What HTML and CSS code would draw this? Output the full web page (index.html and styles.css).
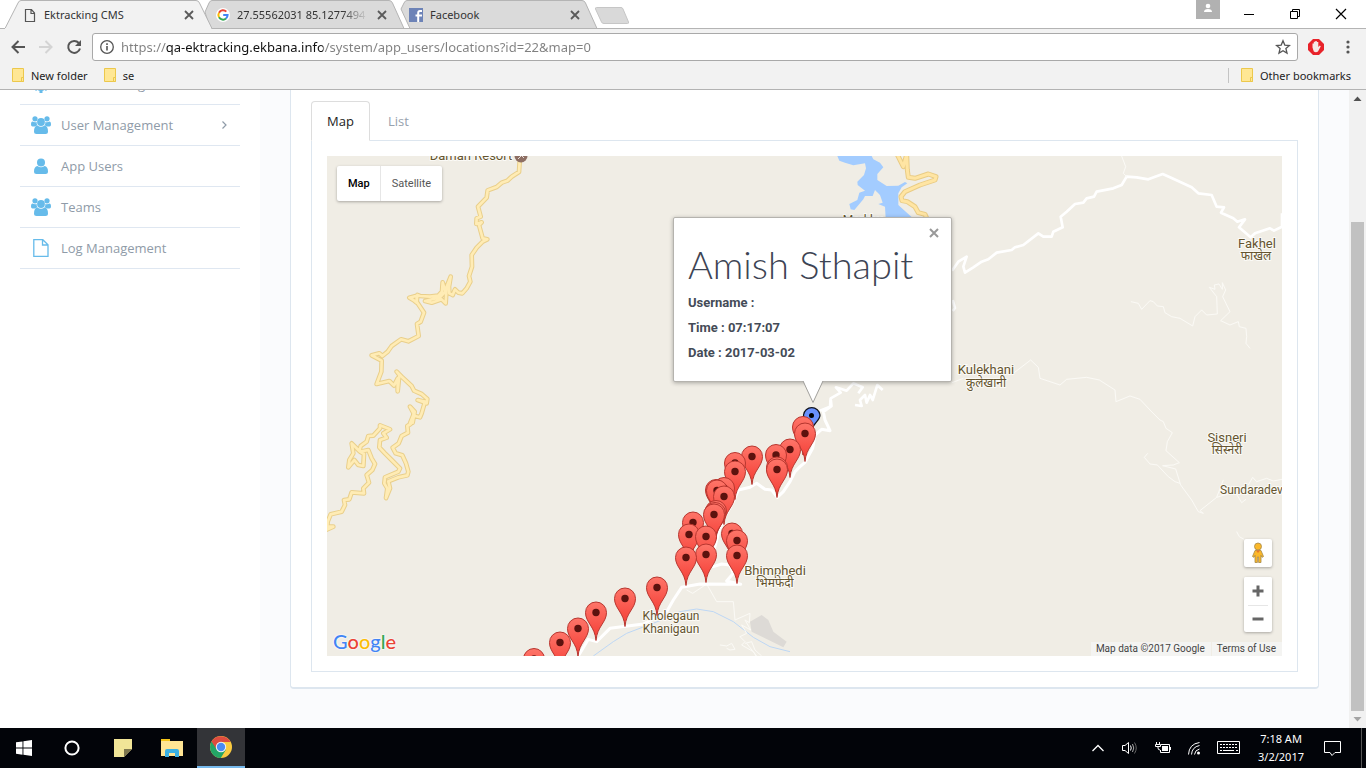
FILE: index.html
```html
<!DOCTYPE html>
<html lang="en">
<head>
<meta charset="utf-8">
<title>Ektracking CMS</title>
<link rel="stylesheet" href="styles.css">
</head>
<body>
<svg class="defs" width="0" height="0" aria-hidden="true">
  <defs>
    <linearGradient id="red" x1="0" y1="0" x2="0" y2="1"><stop offset="0" stop-color="#fe7569"/><stop offset="1" stop-color="#f43b33"/></linearGradient>
    <g id="pin"><path d="M0 28C-1 14-10.500 10-10.500 0A10.500 10.500 0 0 1 10.500 0C10.500 10 1 14 0 28Z" fill="url(#red)" stroke="#b8362f"/><circle r="3.700" fill="#5c120e"/></g>
    <symbol id="folder" viewBox="0 0 12 14"><path d="M.5.500h11v13H.5z" fill="#ffe794" stroke="#ecc84c"/><path d="M9.500 13.500v-4h2v4z" fill="#ffe794" stroke="#ecc84c"/></symbol>
    <symbol id="close" viewBox="0 0 14 14"><path d="M3 3l8 8M11 3l-8 8" stroke="#5a5a5a" stroke-width="1.800"/></symbol>
    <symbol id="users" viewBox="0 0 20 18"><g fill="#66bbea"><circle cx="4" cy="2.800" r="2.600"/><circle cx="16" cy="2.800" r="2.600"/><path d="M0 8.500Q0 5.500 1.600 5.500Q4 7 5.600 5.800Q5.400 8 6.600 9.500Q5 9.500 4.200 10.500H1.500Q0 10.500 0 8.500ZM20 8.500Q20 5.500 18.400 5.500Q16 7 14.400 5.800Q14.600 8 13.400 9.500Q15 9.500 15.800 10.500h2.700Q20 10.500 20 8.500Z"/><circle cx="10" cy="6" r="3.900"/><path d="M6.500 9.600Q10 12 13.500 9.600Q17 10 17 15.500Q17 18 14.500 18H5.500Q3 18 3 15.500Q3 10 6.500 9.600Z"/></g></symbol>
    <symbol id="user" viewBox="0 0 20 18"><g fill="#66bbea"><circle cx="10" cy="5.500" r="4"/><path d="M6.500 9Q10 11.500 13.500 9Q17 9.500 17 14.500Q17 17 14.500 17H5.500Q3 17 3 14.500Q3 9.500 6.500 9Z"/></g></symbol>
    <symbol id="file" viewBox="0 0 20 20"><path d="M2.800 1.700h9l5.200 5v11.600H2.800zM11.500 1.700V7H17" fill="none" stroke="#66bbea" stroke-width="1.300"/></symbol>
    <symbol id="gear" viewBox="0 0 20 20"><circle cx="10" cy="10" r="5" fill="none" stroke="#66bbea" stroke-width="4"/><path d="M10 1v4M10 15v4M1 10h4M15 10h4M4 4l2 2M14 14l2 2M4 16l2-2M14 6l2-2" stroke="#66bbea" stroke-width="3"/></symbol>
  </defs>
</svg>

<header class="browser">
  <div class="tabstrip">
    <svg class="tabshapes" width="640" height="29" viewBox="0 0 640 29" aria-hidden="true">
      <path d="M401 9L404 3Q405 .5 407 .5H582Q584.500 .5 585.500 3L597 28.500H410Z" fill="#dadada" stroke="#b4b4b4"/>
      <path d="M205 12L209 3Q210 .5 212 .5H389Q391.500 .5 392.500 3L404 28.500H210Z" fill="#dadada" stroke="#b4b4b4"/>
      <path d="M596.500 7.500H621Q622.500 7.500 623 9L628.500 22Q629 23.500 627.500 23.500H604Q602 23.500 601.500 22L595.500 9Q595 7.500 596.500 7.500Z" fill="#d9d9d9" stroke="#c6c6c6"/>
      <path d="M0 28.500H5L18 3Q19 .5 21 .5H196Q198.500 .5 199.500 3L212 28.500" fill="#f2f2f2" stroke="#b4b4b4"/>
      <path d="M5 28.500H211" stroke="#f2f2f2"/>
    </svg>
    <div class="tab">
      <svg width="14" height="14" viewBox="0 0 14 14"><path d="M2.500 1.500h6l3 3.500v8.500h-9zM8 1.500v4h3.500" fill="none" stroke="#555" stroke-width="1.200"/></svg>
      <span class="tab-title">Ektracking CMS</span>
      <button class="icon-btn" aria-label="Close tab"><svg width="14" height="14"><use href="#close"/></svg></button>
    </div>
    <div class="tab">
      <svg width="14" height="14" viewBox="0 0 14 14"><circle cx="7" cy="7" r="7" fill="#fff"/><g fill="none" stroke-width="2"><path d="M10.300 3.600A4.600 4.600 0 0 0 3 4.700" stroke="#ea4335"/><path d="M3 4.700A4.600 4.600 0 0 0 3 9.300" stroke="#fbbc05"/><path d="M3 9.300A4.600 4.600 0 0 0 10 10.500" stroke="#34a853"/><path d="M10 10.500Q11.600 9 11.600 7H7.200" stroke="#4285f4"/></g></svg>
      <span class="tab-title fade">27.55562031 85.1277494</span>
      <button class="icon-btn" aria-label="Close tab"><svg width="14" height="14"><use href="#close"/></svg></button>
    </div>
    <div class="tab">
      <svg width="14" height="14" viewBox="0 0 14 14"><path d="M0 0h14v14H0z" fill="#6d83b7"/><path d="M9.200 14V5Q9.200 3 11 3h2M6.500 7.500H13" fill="none" stroke="#fff" stroke-width="2"/></svg>
      <span class="tab-title">Facebook</span>
      <button class="icon-btn" aria-label="Close tab"><svg width="14" height="14"><use href="#close"/></svg></button>
    </div>
    <div class="window-controls">
      <button class="avatar" aria-label="Profile"><svg width="24" height="19" viewBox="0 0 24 19"><circle cx="12" cy="6" r="2.300" fill="#fff"/><path d="M8 12q0-3 4-3t4 3z" fill="#fff"/></svg></button>
      <button class="winbtn" aria-label="Minimize"><svg width="12" height="12"><path d="M1 6.500h10" stroke="#000"/></svg></button>
      <button class="winbtn" aria-label="Restore"><svg width="12" height="12"><path d="M1.500 3.500h7v7h-7zM3.500 3V1.500h7v7H9" fill="none" stroke="#000"/></svg></button>
      <button class="winbtn" aria-label="Close"><svg width="12" height="12"><path d="M1 1l10 10M11 1L1 11" stroke="#000" stroke-width="1.200"/></svg></button>
    </div>
  </div>
  <div class="toolbar">
    <button class="navbtn" aria-label="Back"><svg width="16" height="16" viewBox="0 0 16 16"><path d="M15 8H3M8.500 2L2.500 8l6 6" fill="none" stroke="#555" stroke-width="2"/></svg></button>
    <button class="navbtn" aria-label="Forward"><svg width="16" height="16" viewBox="0 0 16 16"><path d="M1 8h12M7.500 2l6 6-6 6" fill="none" stroke="#d4d4d4" stroke-width="2"/></svg></button>
    <button class="navbtn" aria-label="Reload"><svg width="16" height="16" viewBox="0 0 16 16"><path d="M12.800 4A6 6 0 1 0 14 9.500" fill="none" stroke="#555" stroke-width="2"/><path d="M15 1v6H9z" fill="#555"/></svg></button>
    <div class="omnibox">
      <svg width="16" height="16" viewBox="0 0 16 16"><circle cx="8" cy="8" r="6.300" fill="none" stroke="#555" stroke-width="1.300"/><path d="M8 7v4.500M8 4.300v1.700" stroke="#555" stroke-width="1.600"/></svg>
      <input class="url" type="text" aria-label="Address" value="https://qa-ektracking.ekbana.info/system/app_users/locations?id=22&amp;map=0">
      <svg width="16" height="16" viewBox="0 0 16 16"><path d="M8 1.800l1.800 4.300 4.700.4-3.600 3 1.100 4.600L8 11.700l-4 2.400 1.100-4.600-3.600-3 4.700-.4z" fill="none" stroke="#555" stroke-width="1.300"/></svg>
    </div>
    <button class="ext" aria-label="AdBlock"><svg width="16" height="16" viewBox="0 0 16 16"><path d="M5 0h6l5 5v6l-5 5H5l-5-5V5z" fill="#e8232a"/><path d="M4.500 8.500V4.500h1.300V2.800h1.500V2h1.500v1h1.500v5l1.500-1.500 1 .8L10 12.500Q8 14 5.800 12.500Z" fill="#f6e9e6"/></svg></button>
    <button class="ext" aria-label="Menu"><svg width="16" height="16" viewBox="0 0 16 16"><circle cx="8" cy="3" r="1.600" fill="#555"/><circle cx="8" cy="8" r="1.600" fill="#555"/><circle cx="8" cy="13" r="1.600" fill="#555"/></svg></button>
  </div>
  <nav class="bookmarks">
    <a href="#"><svg width="12" height="14"><use href="#folder"/></svg>New folder</a>
    <a href="#"><svg width="12" height="14"><use href="#folder"/></svg>se</a>
    <a href="#" class="other"><svg width="12" height="14"><use href="#folder"/></svg>Other bookmarks</a>
  </nav>
</header>

<div class="page">
  <aside class="sidebar">
    <nav class="menu">
      <a href="#"><svg width="20" height="20"><use href="#gear"/></svg>Admin Management</a>
      <a href="#"><svg width="20" height="18"><use href="#users"/></svg>User Management<svg class="caret" width="8" height="8" viewBox="0 0 8 8"><path d="M2.500 0.500L6 4 2.500 7.500" fill="none" stroke="#8f9ba8" stroke-width="1.200"/></svg></a>
      <a href="#"><svg width="20" height="18"><use href="#user"/></svg>App Users</a>
      <a href="#"><svg width="20" height="18"><use href="#users"/></svg>Teams</a>
      <a href="#"><svg width="20" height="20"><use href="#file"/></svg>Log Management</a>
    </nav>
  </aside>
  <main class="content">
    <section class="panel">
      <div class="tabs"><a href="#" class="active">Map</a><a href="#">List</a></div>
      <div class="tab-pane">
        <div class="map">
          <svg class="canvas" viewBox="327 156 955 500" preserveAspectRatio="xMinYMin slice" aria-label="Location map">
            <g transform="translate(500 400) scale(.33333)" fill="none" stroke-linejoin="round">
              <path d="M750 665L785 645 805 660 820 695 860 725 850 742 755 695Z" fill="#dddad6"/>
              <path d="M280 768L340 725 380 700 480 662 540 635 590 627 640 635 700 665 760 712 810 740 870 755" stroke="#bdd7f5" stroke-width="3"/>
              <path d="M560 570L578 580 620 552 650 605 700 605 705 660 750 640 748 668 735 660 752 690 725 675 740 700 720 710 735 725 725 735 760 755 768 768M660 735L680 738 695 730 705 748 690 750 680 745M735 730L755 725 765 750 785 768M740 730L770 768" stroke="#fbfaf6" stroke-width="3"/>
              <path d="M992 0L994 18 970 35 975 60 990 92 965 88 945 105 938 145 915 187 900 200 885 215 870 245 850 275 832 292 815 270 795 268 770 250 750 262 715 270 700 305 672 355 655 400 645 440 618 480 640 500 665 492 690 495 700 520 680 543 722 553 600 552 545 562 520 600 500 635 430 672 330 685 290 725 265 718 235 768" stroke="#fff" stroke-width="9"/>
            </g>
            <g transform="translate(820 150) scale(.33333)" fill="none" stroke-linejoin="round">
              <path d="M52 18L58 32 75 38 100 46 135 40 138 55 132 75 112 95 113 105 135 122 118 128 112 150 88 162 92 178 103 180 130 148 135 138 158 138 165 120 180 135 188 158 175 162 195 170 197 204 278 204 235 165 235 130 245 112 262 100 255 96 235 107 200 108 172 90 172 72 190 52 180 38 160 28 155 18Z" fill="#a3ccff"/>
              <g stroke-linecap="round"><path d="M232 14L250 50 260 14 262 60 265 82 285 85 325 72 348 80 345 90 300 105 255 125 243 140 246 152 262 155 285 170 295 188 315 193 320 204" stroke="#e9cc85" stroke-width="15"/><path d="M232 14L250 50 260 14 262 60 265 82 285 85 325 72 348 80 345 90 300 105 255 125 243 140 246 152 262 155 285 170 295 188 315 193 320 204" stroke="#ffe5a3" stroke-width="9"/></g>
              <path d="M396 362L415 335 440 320 430 350 435 368 460 352 485 335 505 328 530 308 575 300 585 292 610 285 655 250 670 260 695 260 700 245 728 232 722 200 740 185 765 162 790 158 800 145 822 140 830 125 880 115 905 105 920 80 950 82 985 88 1028 72 1050 82 1115 112 1135 130 1175 135 1190 170 1212 172 1203 188 1240 205 1252 215 1275 208 1257 232 1292 262 1305 250 1350 235 1362 242 1386 230 1386 190M0 782L30 770 32 745 62 728 48 712 80 722 100 700 128 712 115 730M105 765L125 768 120 750 135 735 140 758 150 735 158 750 165 728 172 705 188 720M398 450L405 474 398 483" stroke="#fff" stroke-width="8"/>
              <path d="M905 18L917 50 910 70 920 80M933 455L955 460 965 478 990 452 1000 455 1012 468 1030 470 1035 488 1055 500 1080 505 1118 528 1125 500 1145 480 1160 495 1192 492 1190 440 1168 412 1185 418 1183 405 1197 402 1207 418 1207 398 1217 420 1208 440 1230 485 1202 512 1230 525 1255 515 1258 530 1278 535 1280 560 1278 580 1290 595M396 698L430 685M580 670L632 630 655 652 660 685 720 705 740 688 800 682 838 690 885 720 888 755 930 738 960 748 990 780" stroke="#fbfaf6" stroke-width="3"/>
            </g>
            <path transform="translate(1080 420) scale(.33333)" d="M210 -30L240 0 250 5 258 25 277 38 262 65 258 92 298 128 280 135 248 137 287 147 302 195 335 240 355 275 370 280 360 272 410 232 430 180M410 232L465 215 485 248 498 238M203 100L193 112 210 132 232 135 265 170 285 185 300 190M505 195L518 172 530 185 560 175 580 183 606 178M470 335L478 350 492 358" fill="none" stroke="#fbfaf6" stroke-width="3"/>
            <g transform="translate(320 150) scale(.33333)" fill="none" stroke-linejoin="round" stroke-linecap="round">
              <g stroke="#e9cf8b" stroke-width="14"><path id="r" d="M600 20L597 66 575 80 562 92 545 98 530 111 503 121 500 143 474 170 482 200 470 205 469 222 485 217 477 225 488 265 502 268 488 275 470 293 455 315 456 350 447 378 451 395 440 415 427 430 415 428 405 418 398 435 388 430 387 410 392 380 380 410 377 460 365 448 335 458 315 453 360 442 376 425 368 397 366 425 355 437 330 440 300 438 292 435 290 458 280 450 268 443 290 437 290 455 312 488 302 515 291 522 296 558 265 574 243 568 215 588 203 605 187 618 178 610 155 616 185 632 184 665 170 702 208 693 222 707 233 685 233 724 238 675 230 665 245 680 275 708 282 722 305 732 322 747 320 760 293 750 315 755 305 790 300 802 285 798 270 770 284 785 278 818 270 820 280 795 272 822 262 828 264 848 245 858 236 880 218 893 227 910 247 916 258 940 265 965 262 976 235 982 205 994 210 1015 198 1044 202 1015 193 1000 195 982 235 965 240 955 215 930 195 910 178 892 180 870 200 863 190 850 210 838 180 826 180 835 160 857 145 858 140 875 122 888 118 903 95 880 100 910 88 930 85 952 103 930 115 945 130 948 132 912 120 905 145 900 155 925 165 942 157 960 140 975 147 998 130 1015 132 1030 95 1027 88 1048 72 1050 75 1065 65 1085 32 1093 23 1115 22 1130 40 1130 18 1140"/></g>
              <use href="#r" stroke="#ffecb5" stroke-width="8"/>
            </g>
            <circle cx="521" cy="156" r="6.500" fill="#8d6e63"/><path d="M518 159l5-5M520 154l4 4" stroke="#e8dfda"/>
            <g class="labels">
              <text x="471" y="160">Daman Resort</text>
              <text class="small" x="863" y="224">Markhu</text>
              <text x="1257" y="248">Fakhel</text><text class="small" x="1256" y="260">फाखेल</text>
              <text x="986" y="374">Kulekhani</text><text class="small" x="986" y="387">कुलेखानी</text>
              <text x="1227" y="442">Sisneri</text><text class="small" x="1227" y="454">सिस्नेरी</text>
              <text class="small start" x="1220" y="494">Sundaradevi</text>
              <text x="775" y="575">Bhimphedi</text><text class="small" x="775" y="587">भिमफेदी</text>
              <text class="small" x="671" y="620">Kholegaun</text><text class="small" x="671" y="633">Khanigaun</text>
            </g>
            <path d="M812 430C811 423 803.500 421 803.500 415A8.300 8.300 0 0 1 820 415C820 421 813 423 812 430Z" fill="#6991fd" stroke="#10131c" stroke-width="1.200"/><circle cx="811.500" cy="415.500" r="2.500"/>
            <g class="pins">
              <use href="#pin" x="803" y="427"/><use href="#pin" x="805" y="433.500"/><use href="#pin" x="790" y="449.500"/><use href="#pin" x="776" y="455"/><use href="#pin" x="752" y="456.500"/><use href="#pin" x="735" y="463"/><use href="#pin" x="777" y="467.500"/><use href="#pin" x="777" y="469.500"/><use href="#pin" x="735" y="471.500"/><use href="#pin" x="724" y="488"/><use href="#pin" x="716" y="490"/><use href="#pin" x="717" y="490.500"/><use href="#pin" x="724" y="496.500"/><use href="#pin" x="716" y="511"/><use href="#pin" x="715" y="513"/><use href="#pin" x="714" y="514.500"/><use href="#pin" x="693" y="522.500"/><use href="#pin" x="732" y="533.500"/><use href="#pin" x="689" y="534.500"/><use href="#pin" x="706" y="536.500"/><use href="#pin" x="737" y="540.500"/><use href="#pin" x="706" y="554.500"/><use href="#pin" x="737" y="555.500"/><use href="#pin" x="686" y="557.500"/><use href="#pin" x="657" y="587.500"/><use href="#pin" x="625" y="598.500"/><use href="#pin" x="596" y="612.500"/><use href="#pin" x="578" y="628.500"/><use href="#pin" x="560" y="642.500"/><use href="#pin" x="534" y="659"/>
            </g>
          </svg>
          <div class="maptype"><button class="on">Map</button><button>Satellite</button></div>
          <div class="info">
            <button class="icon-btn info-close" aria-label="Close"><svg width="14" height="14" viewBox="0 0 14 14"><path d="M3 3l8 8M11 3l-8 8" stroke="#999" stroke-width="2"/></svg></button>
            <h1>Amish Sthapit</h1>
            <p>Username :</p>
            <p>Time : 07:17:07</p>
            <p>Date : 2017-03-02</p>
            <svg class="tail" width="24" height="24" viewBox="0 0 24 24"><path d="M2 0L12 22 22 0Z" fill="#fff"/><path d="M2 1L12 22.500 22 1" fill="none" stroke="#a3a29f"/></svg>
          </div>
          <a href="#" class="google"><span class="b">G</span><span class="r">o</span><span class="y">o</span><span class="b">g</span><span class="g">l</span><span class="r">e</span></a>
          <div class="controls">
            <button class="ctl" aria-label="Street View"><svg width="14" height="22" viewBox="0 0 14 22"><g fill="#fbb829" stroke="#a5884a" stroke-width=".8"><circle cx="7" cy="4.500" r="3.500"/><path d="M4 8.500h6l2.500 6-1.500.8-1-2V20.500H7.600V15H6.400v5.500H4V13.300l-1 2-1.500-.8z"/></g><path d="M5 8.500h4L7 11z" fill="#e8752b"/></svg></button>
            <div class="zoom">
              <button class="ctl" aria-label="Zoom in"><svg width="12" height="12"><path d="M0.500 6h11M6 .5v11" stroke="#666" stroke-width="3"/></svg></button>
              <button class="ctl" aria-label="Zoom out"><svg width="12" height="12"><path d="M0.500 6h11" stroke="#666" stroke-width="3"/></svg></button>
            </div>
          </div>
          <div class="credits"><span>Map data ©2017 Google</span><a href="#">Terms of Use</a></div>
        </div>
      </div>
    </section>
  </main>
  <div class="scrollbar" aria-hidden="true">
    <svg width="17" height="17"><path d="M4.500 11l4-4.500 4 4.500z" fill="#505050"/></svg>
    <div class="track"><div class="thumb"></div></div>
    <svg width="17" height="17"><path d="M4.500 6l4 4.500 4-4.500z" fill="#a3a3a3"/></svg>
  </div>
</div>

<footer class="taskbar">
  <button class="task" aria-label="Start"><svg width="16" height="16" viewBox="0 0 16 16"><path d="M0 2.300l6.500-.9v6.200H0zM7.400 1.200L16 0v7.600H7.400zM0 8.500h6.500v6.200L0 13.800zM7.400 8.500H16V16l-8.600-1.200z" fill="#fff"/></svg></button>
  <button class="task" aria-label="Cortana"><svg width="16" height="16"><circle cx="8" cy="8" r="6.600" fill="none" stroke="#fff" stroke-width="2"/></svg></button>
  <div class="pinned">
    <button class="task" aria-label="Sticky Notes"><svg width="18" height="18"><path d="M0 0h18v10l-8 8H0z" fill="#f1e597"/><path d="M10 10h8l-8 8z" fill="#7e774e"/></svg></button>
    <button class="task" aria-label="File Explorer"><svg width="22" height="18"><path d="M0 0h9v2h13v15H0z" fill="#ffe594"/><path d="M0 0h9v2H0z" fill="#f5c518"/><path d="M4 18v-6q0-2 2-2h10q2 0 2 2v6h-4v-4H8v4z" fill="#3bb1e3"/></svg></button>
    <button class="task current" aria-label="Google Chrome"><svg width="22" height="22" viewBox="0 0 22 22"><circle cx="11" cy="11" r="11" fill="#fbcb40"/><path d="M11 11L1.500 5.500A11 11 0 0 0 10.800 22L16 13.500z" fill="#23a566"/><path d="M1.500 5.500A11 11 0 0 1 20.600 6H11L6.700 13.500z" fill="#dd4c40"/><circle cx="11" cy="11" r="5.200" fill="#f4f4f4"/><circle cx="11" cy="11" r="4.200" fill="#4b8bf4"/></svg></button>
  </div>
  <div class="tray">
    <svg width="14" height="14"><path d="M1.500 10L7 4.500l5.500 5.500" fill="none" stroke="#fff" stroke-width="1.300"/></svg>
    <svg width="18" height="14"><path d="M1.500 4.500h2.500l3.500-3v11l-3.500-3H1.500z" fill="none" stroke="#fff"/><path d="M9.500 4.500q1.500 2.500 0 5" fill="none" stroke="#fff"/><path d="M11.500 3q2.500 4 0 8" fill="none" stroke="#aaa"/><path d="M13.500 1.500q3.500 5.500 0 11" fill="none" stroke="#666"/></svg>
    <svg width="16" height="14"><path d="M1.500 1v2M4.500 1v2M.5 3.500h5v2H.5zM3 5.500V7q0 2 2 2" fill="none" stroke="#fff"/><path d="M6 3.500h8.500v8h-9V9" fill="none" stroke="#fff"/><path d="M7 5h6v5H7zM15 6h1v3h-1z" fill="#fff"/></svg>
    <svg width="14" height="14"><g fill="none" stroke="#fff"><path d="M1.500 13.500Q2 3 12.500 1.500"/><path d="M4.500 13.500Q5 6 12.500 4.500"/><path d="M7.500 13.500Q8 9 12.500 8"/></g><circle cx="11.500" cy="12" r="1.500" fill="#fff"/></svg>
    <svg width="24" height="14"><path d="M.5.500h22v12H.5z" fill="none" stroke="#fff"/><path d="M3 3.500h18M3 6.500h18" stroke="#fff" stroke-dasharray="2 1"/><path d="M3 9.500h2M6 9.500h11M19 9.500h2" stroke="#fff"/></svg>
    <div class="clock"><span>7:18 AM</span><span>3/2/2017</span></div>
    <svg width="17" height="17"><path d="M.5 1.500h16v11H11L8 15.500 6 12.500H.5z" fill="none" stroke="#fff"/></svg>
  </div>
</footer>
</body>
</html>
```
FILE: styles.css
```css
* { box-sizing: border-box; }
body {
  margin: 0;
  height: 100vh;
  display: flex;
  flex-direction: column;
  overflow: hidden;
  font-family: "Open Sans", "Noto Sans", sans-serif;
  font-size: 12px;
  color: #222;
  background: #fff;
}
a { color: inherit; text-decoration: none; }
button { border: 0; padding: 0; background: none; font: inherit; color: inherit; display: flex; align-items: center; justify-content: center; }
svg { display: block; flex: none; }
.defs { position: absolute; }

.browser { background: #f2f2f2; border-bottom: 1px solid #b3b3b3; flex: none; font-family: "Noto Sans", "Open Sans", sans-serif; font-size: 11px; }
.tabstrip { position: relative; display: flex; height: 29px; padding-left: 15px; background: #fff; border-bottom: 1px solid #b4b4b4; }
.tabshapes { position: absolute; left: 0; top: 0; }
.tab { position: relative; display: flex; align-items: center; gap: 7px; width: 193px; height: 28px; padding: 1px 12px 0 8px; }
.tab-title { flex: 1; overflow: hidden; white-space: nowrap; color: #333; }
.fade { -webkit-mask-image: linear-gradient(to right, #000 80%, transparent); mask-image: linear-gradient(to right, #000 80%, transparent); }
.window-controls { margin-left: auto; display: flex; height: 27px; padding-right: 2px; }
.avatar { width: 24px; height: 19px; background: #b1b1b1; margin-right: 6px; }
.winbtn { width: 46px; }

.toolbar { display: flex; align-items: center; height: 36px; padding: 0 10px; gap: 12px; }
.navbtn { width: 16px; height: 16px; }
.omnibox { flex: 1; display: flex; align-items: center; height: 28px; border: 1px solid #a9a9a9; border-radius: 3px; background: #fff; padding: 0 6px; gap: 6px; margin: 0 -2px; }
.url {
  flex: 1; min-width: 0; border: 0; padding: 0; outline: 0; height: 24px;
  font: 13px "Noto Sans", "Open Sans", sans-serif;
  color: transparent;
  background: linear-gradient(to right, #808080 45px, #111 45px, #111 202px, #808080 202px);
  -webkit-background-clip: text; background-clip: text;
}
.ext { width: 16px; height: 16px; }
.ext + .ext { margin-left: 4px; }

.bookmarks { display: flex; align-items: center; height: 24px; padding: 0 15px 4px 12px; gap: 16px; }
.bookmarks a { display: flex; align-items: center; gap: 7px; }
.bookmarks .other { margin-left: auto; border-left: 1px solid #c4c4c4; padding-left: 12px; }

.page { flex: 1; min-height: 0; display: flex; overflow: hidden; background: #fafbfd; }
.sidebar { width: 260px; flex: none; background: #fff; padding: 0 20px; }
.menu { margin-top: -26px; }
.menu a { display: flex; align-items: center; gap: 10px; height: 41px; padding: 0 12px 0 11px; border-bottom: 1px solid #dfe7f1; font-size: 13px; color: #8f9ba8; }
.caret { margin-left: auto; }
.content { flex: 1; min-width: 0; padding: 0 30px; }
.panel { background: #fff; border: 1px solid #dde6ef; border-top: 0; border-bottom-width: 2px; border-radius: 0 0 4px 4px; padding: 11px 20px 15px; }
.tabs { display: flex; gap: 2px; font-size: 13px; height: 39px; }
.tabs a { height: 40px; line-height: 38px; padding: 0 15px; border: 1px solid transparent; color: #97a1ad; }
.tabs .active { color: #222; background: #fff; border-color: #ddd; border-bottom-color: #fff; border-radius: 4px 4px 0 0; position: relative; }
.tab-pane { border: 1px solid #dde6ef; padding: 15px; }

.map { position: relative; height: 500px; overflow: hidden; background: #f0ede5; font-family: Roboto, sans-serif; }
.canvas { width: 100%; height: 100%; }
.labels { font: 13px Roboto, "Noto Sans", sans-serif; fill: #64542f; stroke: #fbfaf6; stroke-width: 2px; paint-order: stroke; text-anchor: middle; }
.labels .small { font-size: 12px; }
.labels .start { text-anchor: start; }
.maptype { position: absolute; left: 10px; top: 10px; display: flex; height: 35px; background: #fff; border-radius: 2px; box-shadow: 0 1px 3px rgba(0,0,0,.3); font-size: 11px; color: #565656; }
.maptype button { padding: 0 11px; }
.maptype .on { padding-right: 10px; font-weight: 500; color: #000; border-right: 1px solid #e6e6e6; }
.info { position: absolute; left: 346px; top: 61px; width: 279px; height: 165px; padding: 26px 14px 0; background: #fff; border: 1px solid #b5b3ae; border-radius: 2px; box-shadow: 0 1px 4px rgba(0,0,0,.3); color: #444b57; }
.info-close { position: absolute; right: 10px; top: 8px; }
.info h1 { margin: 0 0 6px; font: 300 38px/40px Lato, sans-serif; white-space: nowrap; color: #3d4454; }
.info p { margin: 0; font-size: 13px; line-height: 25px; font-weight: 700; }
.tail { position: absolute; left: 127px; top: 162px; }
.google { position: absolute; left: 6px; bottom: 2px; font: 500 20px/26px Lato, sans-serif; text-shadow: 0 0 2px #fff, 0 0 2px #fff; }
.b { color: #4285f4; } .r { color: #ea4335; } .y { color: #fbbc05; } .g { color: #34a853; }
.controls { position: absolute; right: 10px; bottom: 24px; display: flex; flex-direction: column; gap: 10px; }
.ctl { width: 28px; height: 28px; background: #fff; border-radius: 2px; }
.controls > * { box-shadow: 0 1px 3px rgba(0,0,0,.3); }
.zoom { background: #fff; border-radius: 2px; }
.zoom .ctl + .ctl { height: 27px; background: linear-gradient(#e6e6e6, #e6e6e6) center top / 20px 1px no-repeat; }
.credits { position: absolute; right: 0; bottom: 0; display: flex; gap: 1px; font-size: 10px; line-height: 14px; color: #444; }
.credits > * { background: rgba(245,245,245,.75); padding: 0 6px 0 5px; }

.scrollbar { width: 17px; flex: none; display: flex; flex-direction: column; background: #f1f1f1; }
.track { flex: 1; display: flex; flex-direction: column; justify-content: flex-end; padding: 0 2px; }
.thumb { height: 81%; background: #c1c1c1; }

.taskbar { flex: none; height: 40px; background: #020409; color: #fff; display: flex; font-family: "Noto Sans", "Open Sans", sans-serif; }
.task { width: 48px; }
.pinned { display: flex; gap: 1px; margin-left: 3px; }
.current { background: #333438; border-bottom: 2px solid #76b9ed; }
.tray { margin-left: auto; display: flex; align-items: center; gap: 16px; margin-right: 4px; padding-right: 20px; border-right: 1px solid #555; }
.clock { display: flex; flex-direction: column; text-align: center; line-height: 18px; font-size: 11px; margin: 0 4px 0 1px; }
```
